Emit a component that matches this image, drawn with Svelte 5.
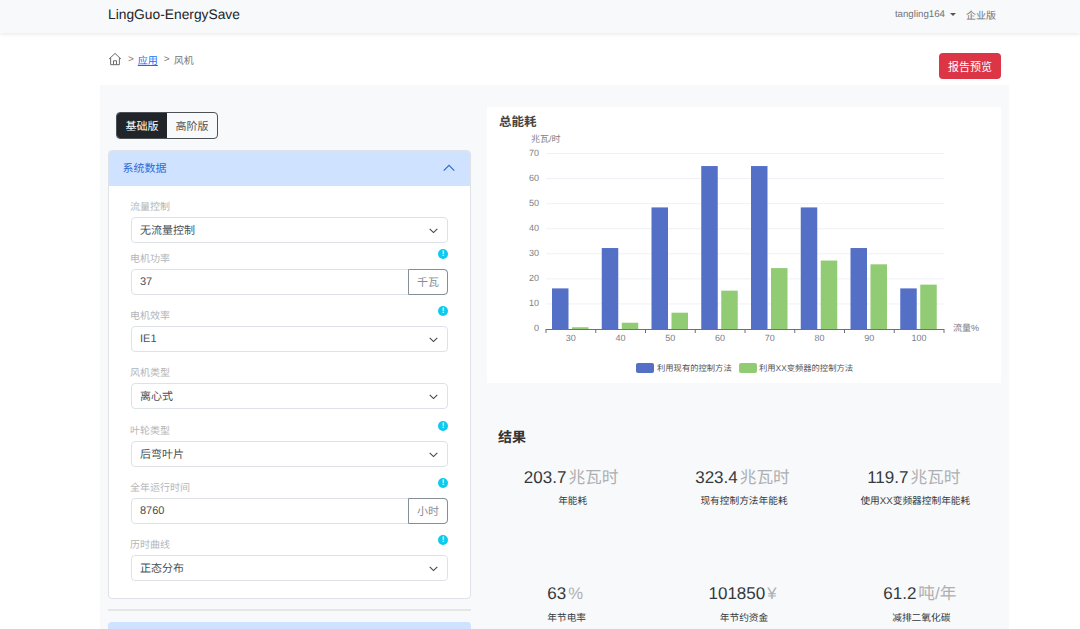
<script>
  const fields = [
    { label: '流量控制', value: '无流量控制', first: true },
    { label: '电机功率', value: '37', unit: '千瓦', info: true },
    { label: '电机效率', value: 'IE1', info: true },
    { label: '风机类型', value: '离心式', wide: true },
    { label: '叶轮类型', value: '后弯叶片', info: true },
    { label: '全年运行时间', value: '8760', unit: '小时', info: true },
    { label: '历时曲线', value: '正态分布', info: true }
  ];
  const statRows = [
    [
      { value: '203.7', unit: '兆瓦时', label: '年能耗' },
      { value: '323.4', unit: '兆瓦时', label: '现有控制方法年能耗' },
      { value: '119.7', unit: '兆瓦时', label: '使用XX变频器控制年能耗' }
    ],
    [
      { value: '63', unit: '%', label: '年节电率' },
      { value: '101850', unit: '¥', label: '年节约资金' },
      { value: '61.2', unit: '吨/年', label: '减排二氧化碳' }
    ]
  ];
  const cats = [30, 40, 50, 60, 70, 80, 90, 100];
  const blue = [16.2, 32.3, 48.5, 65, 65, 48.5, 32.3, 16.2];
  const green = [0.7, 2.5, 6.5, 15.3, 24.3, 27.3, 25.8, 17.7];
  const ticks = [0, 10, 20, 30, 40, 50, 60, 70];
  const x0 = 59, step = 49.75, y0 = 222, unitY = 2.507;
  const yOf = (v) => y0 - v * unitY;
</script>

<div class="page">
  <nav class="nav">
    <span class="brand">LingGuo-EnergySave</span>
    <div class="nav-right">
      <span class="user">tangling164</span>
      <span class="caret"></span>
      <span class="edition">企业版</span>
    </div>
  </nav>

  <div class="crumbs">
    <div class="crumb-list">
      <svg class="home" viewBox="0 0 16 16" width="14" height="14" fill="none" stroke="#666" stroke-width="1.1">
        <path d="M1.2 8 8 1.6 14.8 8" />
        <path d="M3 6.6V14.5H13V6.6" />
        <path d="M6.3 14.5V10H9.7V14.5" />
      </svg>
      <span class="sep">&gt;</span>
      <span class="link">应用</span>
      <span class="sep">&gt;</span>
      <span class="current">风机</span>
    </div>
    <button class="report">报告预览</button>
  </div>

  <main class="panel">
    <section class="left">
      <div class="toggle">
        <span class="tab active">基础版</span>
        <span class="tab">高阶版</span>
      </div>
      <div class="acc">
        <div class="acc-head">
          <span>系统数据</span>
          <svg viewBox="0 0 16 16" width="14" height="14" fill="none" stroke="#2a6bd8" stroke-width="1.4">
            <path d="M2 11 8 5l6 6" />
          </svg>
        </div>
        <div class="acc-body">
          {#each fields as f}
            <div class="field" class:first={f.first} class:wide={f.wide}>
              <div class="label">{f.label}</div>
              {#if f.info}
                <span class="info">!</span>
              {/if}
              <div class="control">
                <span class="val">{f.value}</span>
                {#if f.unit}
                  <span class="unit">{f.unit}</span>
                {:else}
                  <svg class="chev" viewBox="0 0 16 16" width="11" height="11" fill="none" stroke="#444" stroke-width="1.6">
                    <path d="M2.5 5.5 8 11l5.5-5.5" />
                  </svg>
                {/if}
              </div>
            </div>
          {/each}
        </div>
      </div>
      <div class="rule"></div>
      <div class="acc-next"></div>
    </section>

    <section class="right">
      <div class="chart-card">
        <div class="chart-title">总能耗</div>
        <svg class="chart" width="514" height="276" viewBox="0 0 514 276">
          <text x="44" y="35" class="axis-name">兆瓦/时</text>
          {#each ticks as t}
            {#if t > 0}
              <line x1={x0} x2={x0 + step * 8} y1={yOf(t)} y2={yOf(t)} stroke="#eff1f7" />
            {/if}
            <text x={x0 - 7} y={yOf(t) + 2} text-anchor="end" class="tick">{t}</text>
          {/each}
          {#each cats as c, i}
            <rect x={x0 + step * i + 6} y={yOf(blue[i])} width="16.5" height={blue[i] * unitY} fill="#5470c6" />
            <rect x={x0 + step * i + 26} y={yOf(green[i])} width="16.5" height={green[i] * unitY} fill="#91cc75" />
            <line x1={x0 + step * i} x2={x0 + step * i} y1={y0} y2={y0 + 4} stroke="#6e7079" />
            <text x={x0 + step * (i + 0.5)} y={y0 + 12} text-anchor="middle" class="tick">{c}</text>
          {/each}
          <line x1={x0 + step * 8} x2={x0 + step * 8} y1={y0} y2={y0 + 4} stroke="#6e7079" />
          <line x1={x0} x2={x0 + step * 8} y1={y0 + 0.5} y2={y0 + 0.5} stroke="#6e7079" />
          <text x="466" y="224" class="axis-name">流量%</text>
          <rect x="149" y="256" width="18" height="10" rx="2" fill="#5470c6" />
          <text x="170" y="264" class="legend">利用现有的控制方法</text>
          <rect x="252" y="256" width="18" height="10" rx="2" fill="#91cc75" />
          <text x="272" y="264" class="legend">利用XX变频器的控制方法</text>
        </svg>
      </div>

      <h2 class="result-title">结果</h2>
      {#each statRows as row, r}
        <div class="stats" class:second={r === 1}>
          {#each row as s}
            <div class="stat">
              <div class="num">{s.value}<span class="num-unit">{s.unit}</span></div>
              <div class="stat-label">{s.label}</div>
            </div>
          {/each}
        </div>
      {/each}
    </section>
  </main>
</div>

<style>
  :global(body) {
    margin: 0;
    background: #fff;
  }
  .page {
    height: 629px;
    overflow: hidden;
    font-family: "Liberation Sans", "Noto Sans CJK SC", sans-serif;
    color: #212529;
    text-rendering: geometricPrecision;
  }
  .nav {
    height: 33px;
    background: #f8f9fa;
    box-shadow: 0 1px 4px rgba(0, 0, 0, 0.1);
    display: flex;
    align-items: center;
    justify-content: space-between;
    padding: 0 84px 5px 108px;
    box-sizing: border-box;
    position: relative;
  }
  .brand {
    font-size: 13.8px;
    color: #212529;
  }
  .nav-right {
    display: flex;
    align-items: center;
    font-size: 10px;
    color: #6c757d;
  }
  .user {
    font-size: 9.7px;
  }
  .caret {
    width: 0;
    height: 0;
    border: 3px solid transparent;
    border-top-color: #555;
    border-bottom-width: 0;
    margin: 0 10px 0 5px;
  }
  .crumbs {
    height: 52px;
    display: flex;
    justify-content: space-between;
    padding: 20px 79px 0 108px;
    box-sizing: border-box;
  }
  .crumb-list {
    display: flex;
    align-items: center;
    height: 14px;
    font-size: 10px;
    color: #777;
    margin-top: -1px;
  }
  .sep {
    margin: 0 4px 0 6px;
  }
  .link {
    color: #0d6efd;
    text-decoration: underline;
  }
  .report {
    width: 62px;
    height: 26px;
    border: 0;
    padding: 0;
    border-radius: 4px;
    background: #dc3545;
    color: #fff;
    font: 11px "Liberation Sans", "Noto Sans CJK SC", sans-serif;
  }
  .panel {
    width: 909px;
    margin-left: 100px;
    height: 544px;
    background: #f8f9fa;
    display: flex;
    box-sizing: border-box;
    padding: 0 8px;
  }
  .left {
    width: 363px;
    padding-top: 27px;
    flex: none;
  }
  .toggle {
    display: inline-flex;
    margin-left: 8px;
    height: 27px;
    box-sizing: border-box;
    border: 1px solid #4b5157;
    border-radius: 4px;
    overflow: hidden;
    font-size: 11px;
    vertical-align: top;
  }
  .tab {
    width: 50px;
    display: flex;
    align-items: center;
    justify-content: center;
    color: #555;
  }
  .tab.active {
    background: #212529;
    color: #fff;
  }
  .acc {
    margin-top: 11px;
    border: 1px solid #dfe2e6;
    border-radius: 4px;
    background: #fff;
    overflow: hidden;
  }
  .acc-head {
    height: 35px;
    background: #cfe2ff;
    color: #2a6bd8;
    font-size: 11px;
    display: flex;
    align-items: center;
    justify-content: space-between;
    padding: 0 14px 2px 13.5px;
    box-sizing: border-box;
  }
  .acc-body {
    padding: 15px 22px 2px;
  }
  .field {
    position: relative;
    margin-bottom: 15px;
  }
  .field.first {
    margin-bottom: 10px;
  }
  .field.wide {
    margin-bottom: 16px;
  }
  .label {
    font-size: 10px;
    line-height: 14px;
    color: #b3b6b9;
    margin: 0 0 2px -1px;
  }
  .info {
    position: absolute;
    right: 0;
    top: -4px;
    width: 10px;
    height: 10px;
    border-radius: 50%;
    background: #0dcaf0;
    color: #fff;
    font-size: 8px;
    font-weight: 700;
    line-height: 10px;
    text-align: center;
  }
  .control {
    height: 26px;
    box-sizing: border-box;
    border: 1px solid #dee2e6;
    border-radius: 4px;
    background: #fff;
    display: flex;
    align-items: center;
    justify-content: space-between;
    padding-left: 8px;
    font-size: 11px;
    color: #495057;
    position: relative;
  }
  .chev {
    margin-right: 8px;
  }
  .unit {
    align-self: stretch;
    width: 40px;
    box-sizing: border-box;
    margin: -1px -1px -1px 0;
    border: 1px solid #868e96;
    border-radius: 0 4px 4px 0;
    display: flex;
    align-items: center;
    justify-content: center;
    color: #868e96;
    font-size: 11px;
  }
  .rule {
    height: 2px;
    background: #e4e6e8;
    margin-top: 10px;
  }
  .acc-next {
    height: 20px;
    margin-top: 11px;
    background: #cfe2ff;
    border-radius: 4px 4px 0 0;
  }
  .right {
    margin-left: 16px;
    width: 514px;
    padding-top: 22px;
  }
  .chart-card {
    height: 276px;
    background: #fff;
    position: relative;
  }
  .chart-title {
    position: absolute;
    left: 12px;
    top: 4px;
    font-size: 12.5px;
    font-weight: 700;
    color: #444;
  }
  .chart {
    display: block;
  }
  .axis-name, .tick {
    font-size: 9px;
    fill: #7d8088;
  }
  .legend {
    font-size: 8.3px;
    fill: #555;
  }
  .result-title {
    margin: 45px 0 0 11px;
    font-size: 14px;
    line-height: 18px;
    font-weight: 700;
    color: #333;
  }
  .stats {
    display: grid;
    grid-template-columns: repeat(3, 1fr);
    height: 116px;
    margin-top: 18px;
  }
  .stats.second {
    margin: 0 -9px;
  }
  .stat {
    text-align: center;
  }
  .num {
    font-size: 17px;
    line-height: 28px;
    color: #343a40;
    padding-right: 3px;
  }
  .num-unit {
    color: #adb0b3;
    margin-left: 2px;
    font-size: 16.7px;
  }
  .stat-label {
    font-size: 9.7px;
    line-height: 14px;
    margin-top: 3px;
    color: #343a40;
  }
  .second .stat-label {
    margin-top: 4px;
  }
</style>
